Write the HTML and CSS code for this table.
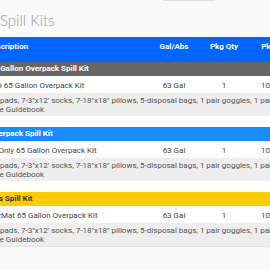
FILE: index.html
```html
<!DOCTYPE html>
<html>
<head>
<meta charset="utf-8">
<link rel="stylesheet" href="styles.css">
</head>
<body>
<div class="topbar"></div>
<h1 class="title">Spill Kits</h1>
<div class="sheet">
<table class="kits">
  <colgroup>
    <col class="c-desc"><col class="c-num"><col class="c-num"><col class="c-num">
  </colgroup>
  <thead>
    <tr><th class="left">Description</th><th>Gal/Abs</th><th>Pkg Qty</th><th>Pkg Wt</th></tr>
  </thead>
  <tbody>
    <tr class="cat cat-gray"><td colspan="4">65 Gallon Overpack Spill Kit</td></tr>
    <tr class="prod"><td>STD 65 Gallon Overpack Kit</td><td>63 Gal</td><td>1</td><td>100 lbs</td></tr>
    <tr class="desc"><td colspan="4">50 pads, 7-3"x12' socks, 7-18"x18" pillows, 5-disposal bags, 1 pair goggles, 1 pair nitrile gloves, 1 Pocket<br>Size Guidebook</td></tr>
    <tr class="gap"><td colspan="4"></td></tr>

    <tr class="cat cat-blue"><td colspan="4">Overpack Spill Kit</td></tr>
    <tr class="prod"><td>Oil Only 65 Gallon Overpack Kit</td><td>63 Gal</td><td>1</td><td>100 lbs</td></tr>
    <tr class="desc"><td colspan="4">50 pads, 7-3"x12' socks, 7-18"x18" pillows, 5-disposal bags, 1 pair goggles, 1 pair nitrile gloves, 1 Pocket<br>Size Guidebook</td></tr>
    <tr class="gap"><td colspan="4"></td></tr>

    <tr class="cat cat-yellow"><td colspan="4">Gas Spill Kit</td></tr>
    <tr class="prod"><td>HazMat 65 Gallon Overpack Kit</td><td>63 Gal</td><td>1</td><td>100 lbs</td></tr>
    <tr class="desc last"><td colspan="4">50 pads, 7-3"x12' socks, 7-18"x18" pillows, 5-disposal bags, 1 pair goggles, 1 pair nitrile gloves, 1 Pocket<br>Size Guidebook</td></tr>
  </tbody>
</table>
</div>
</body>
</html>
```
FILE: styles.css
```css
html, body {
  margin: 0;
  padding: 0;
  overflow: hidden;
  background: #f9f9f9;
  font-family: Roboto, "Liberation Sans", sans-serif;
}
.topbar {
  margin-left: 163px;
  width: 52px;
  height: 1px;
  background: #e0e0e0;
}
.title {
  margin: 0;
  height: 36px;
  padding-top: 9px;
  box-sizing: border-box;
  font-family: Lato, "Open Sans", sans-serif;
  font-weight: 300;
  font-size: 15px;
  line-height: 20px;
  color: #9c9c9c;
}
.sheet {
  margin-left: -21px;
  width: 320px;
}
.kits {
  width: 320px;
  border-collapse: collapse;
  table-layout: fixed;
  background: #fff;
  font-size: 8px;
}
.c-desc { width: 170px; }
.c-num { width: 50px; }
.kits th {
  height: 25px;
  box-sizing: border-box;
  padding: 5px 0 0;
  vertical-align: top;
  background: #0066ff;
  color: #fff;
  font-weight: 700;
  line-height: 10px;
  text-align: center;
  white-space: nowrap;
}
.kits th.left {
  text-align: left;
  padding-left: 8px;
}
.kits td {
  padding: 0;
  white-space: nowrap;
}
.cat td {
  height: 14px;
  padding: 0 10px;
  line-height: 14px;
  font-weight: 700;
  color: #fff;
}
.cat-gray td { background: #666; }
.cat-blue td { background: #1a8cff; }
.cat-yellow td { background: #ffcc00; color: #333; }
.prod td {
  height: 17px;
  padding-top: 3px;
  box-sizing: border-box;
  line-height: 14px;
  color: #444;
  text-align: center;
}
.prod td:first-child {
  text-align: left;
  padding-left: 8px;
}
.desc td {
  padding: 3px 10px 2px;
  line-height: 9px;
  background: #eee;
  color: #555;
}
.desc.last td { border-bottom: 1px solid #e4e4e4; }
.gap td {
  height: 11px;
  background: #fff;
}
```
